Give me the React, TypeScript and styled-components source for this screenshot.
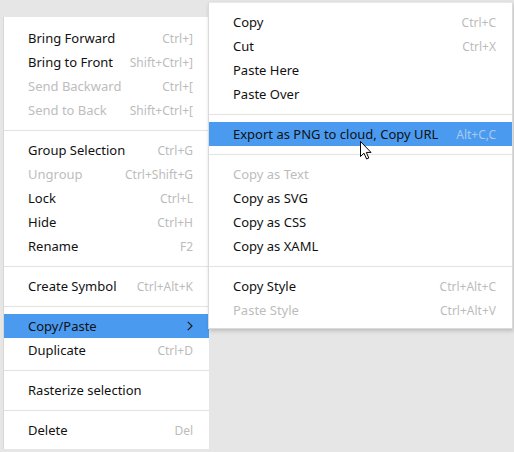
import React from "react";
import styled, { createGlobalStyle } from "styled-components";

const GlobalStyle = createGlobalStyle`
  html, body {
    margin: 0;
    padding: 0;
    background: #e6e6e6;
  }
  body {
    font-family: "Noto Sans", "Open Sans", sans-serif;
  }
`;

type Item =
  | { kind: "sep" }
  | {
      kind?: "item";
      label: string;
      shortcut?: string;
      disabled?: boolean;
      active?: boolean;
      sub?: boolean;
    };

const mainItems: Item[] = [
  { label: "Bring Forward", shortcut: "Ctrl+]" },
  { label: "Bring to Front", shortcut: "Shift+Ctrl+]" },
  { label: "Send Backward", shortcut: "Ctrl+[", disabled: true },
  { label: "Send to Back", shortcut: "Shift+Ctrl+[", disabled: true },
  { kind: "sep" },
  { label: "Group Selection", shortcut: "Ctrl+G" },
  { label: "Ungroup", shortcut: "Ctrl+Shift+G", disabled: true },
  { label: "Lock", shortcut: "Ctrl+L" },
  { label: "Hide", shortcut: "Ctrl+H" },
  { label: "Rename", shortcut: "F2" },
  { kind: "sep" },
  { label: "Create Symbol", shortcut: "Ctrl+Alt+K" },
  { kind: "sep" },
  { label: "Copy/Paste", active: true, sub: true },
  { label: "Duplicate", shortcut: "Ctrl+D" },
  { kind: "sep" },
  { label: "Rasterize selection" },
  { kind: "sep" },
  { label: "Delete", shortcut: "Del" },
];

const subItems: Item[] = [
  { label: "Copy", shortcut: "Ctrl+C" },
  { label: "Cut", shortcut: "Ctrl+X" },
  { label: "Paste Here" },
  { label: "Paste Over" },
  { kind: "sep" },
  { label: "Export as PNG to cloud, Copy URL", shortcut: "Alt+C,C", active: true },
  { kind: "sep" },
  { label: "Copy as Text", disabled: true },
  { label: "Copy as SVG" },
  { label: "Copy as CSS" },
  { label: "Copy as XAML" },
  { kind: "sep" },
  { label: "Copy Style", shortcut: "Ctrl+Alt+C" },
  { label: "Paste Style", shortcut: "Ctrl+Alt+V", disabled: true },
];

export default function App() {
  return (
    <>
      <GlobalStyle />
      <Canvas>
        <Menu $width={206} $top={17} $left={3}>
          {renderItems(mainItems)}
        </Menu>
        <SubMenu $width={305} $top={2} $left={-1}>
          {renderItems(subItems)}
          <Cursor viewBox="0 0 13 19" width="13" height="19">
            <path
              d="M0.5 0.5 L0.5 15.5 L4 12.2 L6.6 18 L8.8 17 L6.3 11.4 L11 11.4 Z"
              fill="#fff"
              stroke="#000"
              strokeWidth="1"
              strokeLinejoin="miter"
            />
          </Cursor>
        </SubMenu>
      </Canvas>
    </>
  );
}

function renderItems(items: Item[]) {
  return items.map((it, i) => {
    if (it.kind === "sep") return <Separator key={i} />;
    return (
      <Row key={i} $active={it.active} $disabled={it.disabled}>
        <Label>{it.label}</Label>
        {it.sub ? (
          <Chevron viewBox="0 0 6 10" width="6" height="10">
            <path d="M0.8 0.8 L5 5 L0.8 9.2" fill="none" stroke="#1a1a1a" strokeWidth="1.2" />
          </Chevron>
        ) : (
          it.shortcut && <Shortcut $active={it.active}>{it.shortcut}</Shortcut>
        )}
      </Row>
    );
  });
}

const Canvas = styled.div`
  width: 514px;
  height: 452px;
  display: flex;
  align-items: flex-start;
  overflow: hidden;
`;

const Menu = styled.div<{ $width: number; $top: number; $left: number }>`
  width: ${(p) => p.$width}px;
  margin-top: ${(p) => p.$top}px;
  margin-left: ${(p) => p.$left}px;
  box-sizing: border-box;
  background: #fff;
  border-left: 1px solid #d6d6d6;
  padding: 9px 0 7px;
  display: flex;
  flex-direction: column;
`;

const SubMenu = styled(Menu)`
  position: relative;
  border: 1px solid #dadada;
  border-top-color: #e8e8e8;
  padding: 7px 0 6px;
  box-shadow: 1px 2px 4px rgba(0, 0, 0, 0.18);
  z-index: 1;
`;

const Row = styled.div<{ $active?: boolean; $disabled?: boolean }>`
  height: 24px;
  display: flex;
  align-items: center;
  justify-content: space-between;
  padding: 0 16px 0 24px;
  background: ${(p) => (p.$active ? "#4a9bf0" : "transparent")};
  color: ${(p) => (p.$disabled ? "#bdbdbd" : "#111")};
  font-size: 13px;
  white-space: nowrap;
`;

const Label = styled.span`
  line-height: 24px;
`;

const Shortcut = styled.span<{ $active?: boolean }>`
  font-size: 12px;
  color: ${(p) => (p.$active ? "#a9c9ee" : "#bcbcbc")};
`;

const Chevron = styled.svg`
  display: block;
  margin-right: 0;
`;

const Separator = styled.div`
  height: 16px;
  display: flex;
  align-items: center;
  &::after {
    content: "";
    flex: 1;
    height: 1px;
    background: #e3e3e3;
  }
`;

const Cursor = styled.svg`
  position: absolute;
  left: 151px;
  top: 138px;
`;
